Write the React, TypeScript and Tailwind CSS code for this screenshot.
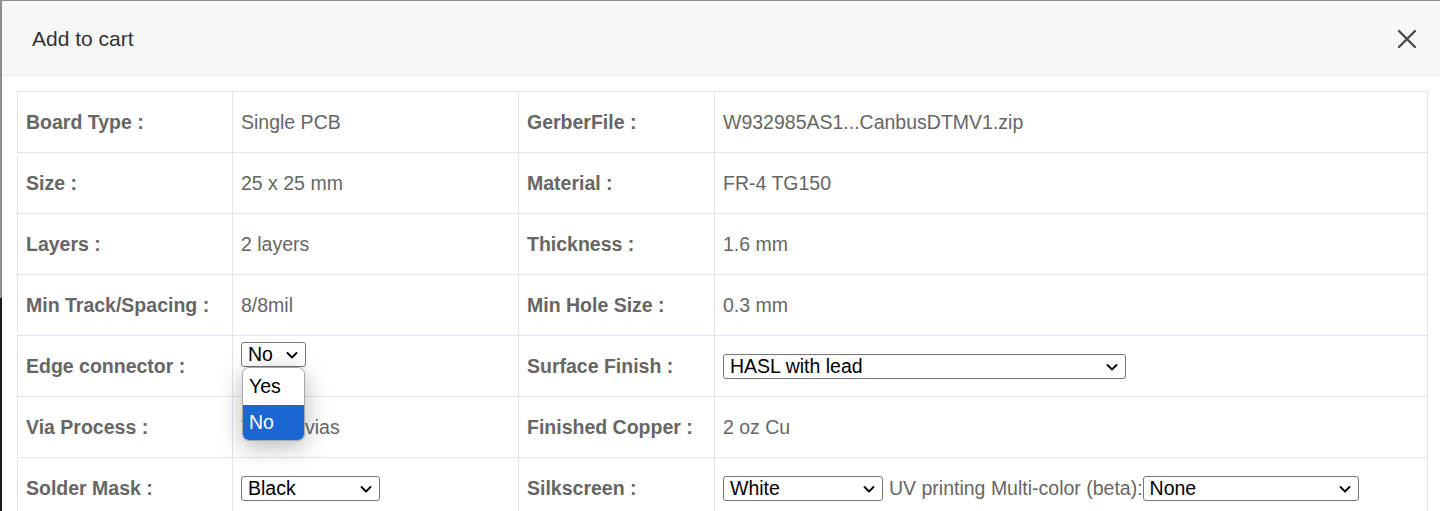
import React from "react";

const Chevron = () => (
  <svg width="14" height="14" viewBox="0 0 14 14" className="shrink-0">
    <path d="M2.5 5 L7 9.5 L11.5 5" fill="none" stroke="#000" strokeWidth="1.8" strokeLinecap="round" strokeLinejoin="round" />
  </svg>
);

const Select = ({ value, w }: { value: string; w: string }) => (
  <div
    className={`${w} h-[25px] shrink-0 flex items-center justify-between border border-[#767676] rounded-[3px] bg-white pl-[6px] pr-[6px] text-[19.5px] text-black leading-none`}
  >
    <span>{value}</span>
    <Chevron />
  </div>
);

const Label = ({ children }: { children: React.ReactNode }) => (
  <td className="border border-[#e4e4ec] pl-[8px] pt-[1px] font-bold text-[#666] align-middle">{children}</td>
);

const Val = ({ children, extra = "" }: { children: React.ReactNode; extra?: string }) => (
  <td className={`border border-[#e4e4ec] pl-[8px] pt-[1px] text-[#666] ${extra}`}>{children}</td>
);

export default function App() {
  return (
    <div
      className="w-[1440px] h-[511px] overflow-hidden flex bg-[#8c8c8c]"
      style={{ fontFamily: '"Liberation Sans", Arial, sans-serif' }}
    >
      <div className="w-[2px] shrink-0 flex flex-col">
        <div className="h-[298px] bg-[#8c8c8c]" />
        <div className="flex-1 bg-[#1c1c1c]" />
      </div>
      <div className="mt-[1px] w-[1439px] shrink-0 bg-white flex flex-col">
        <div className="h-[75px] shrink-0 bg-[#f7f7f7] border-b border-[#ececec] flex items-center justify-between pl-[30px] pr-[24px]">
          <span className="text-[21px] text-[#333] mt-[2px]">Add to cart</span>
          <svg width="20" height="20" viewBox="0 0 20 20" className="mt-[1px]">
            <path d="M2 2 L18 18 M18 2 L2 18" stroke="#444" strokeWidth="2.2" strokeLinecap="round" />
          </svg>
        </div>
        <div className="pt-[15px] pl-[15px] shrink-0">
          <table className="border-collapse text-[19.5px] table-fixed w-[1410px]">
            <colgroup>
              <col className="w-[215px]" />
              <col className="w-[286px]" />
              <col className="w-[196px]" />
              <col className="w-[713px]" />
            </colgroup>
            <tbody>
              <tr className="h-[61px]">
                <Label>Board Type :</Label>
                <Val>Single PCB</Val>
                <Label>GerberFile :</Label>
                <Val>W932985AS1...CanbusDTMV1.zip</Val>
              </tr>
              <tr className="h-[61px]">
                <Label>Size :</Label>
                <Val>25 x 25 mm</Val>
                <Label>Material :</Label>
                <Val>FR-4 TG150</Val>
              </tr>
              <tr className="h-[61px]">
                <Label>Layers :</Label>
                <Val>2 layers</Val>
                <Label>Thickness :</Label>
                <Val>1.6 mm</Val>
              </tr>
              <tr className="h-[61px]">
                <Label>Min Track/Spacing :</Label>
                <Val>8/8mil</Val>
                <Label>Min Hole Size :</Label>
                <Val>0.3 mm</Val>
              </tr>
              <tr className="h-[61px]">
                <Label>Edge connector :</Label>
                <Val extra="align-top pt-[6px]">
                  <div className="relative w-[65px]">
                    <Select value="No" w="w-[65px]" />
                    <div className="absolute left-[1px] top-[25px] w-[63px] z-10 bg-white border border-[#a8a8a8] rounded-[7px] overflow-hidden shadow-[0_6px_24px_rgba(0,0,0,0.28)] text-[19.5px]">
                      <div className="h-[37px] flex items-center pl-[6px] text-black">Yes</div>
                      <div className="h-[35px] flex items-center pl-[6px] bg-[#1a66d2] text-white">No</div>
                    </div>
                  </div>
                </Val>
                <Label>Surface Finish :</Label>
                <Val>
                  <Select value="HASL with lead" w="w-[403px]" />
                </Val>
              </tr>
              <tr className="h-[61px]">
                <Label>Via Process :</Label>
                <Val>Tented vias</Val>
                <Label>Finished Copper :</Label>
                <Val>2 oz Cu</Val>
              </tr>
              <tr className="h-[61px]">
                <Label>Solder Mask :</Label>
                <Val>
                  <Select value="Black" w="w-[139px]" />
                </Val>
                <Label>Silkscreen :</Label>
                <Val>
                  <div className="flex items-center">
                    <Select value="White" w="w-[160px]" />
                    <span className="ml-[6px] whitespace-nowrap">UV printing Multi-color (beta):</span>
                    <Select value="None" w="w-[216px]" />
                  </div>
                </Val>
              </tr>
            </tbody>
          </table>
        </div>
      </div>
    </div>
  );
}
